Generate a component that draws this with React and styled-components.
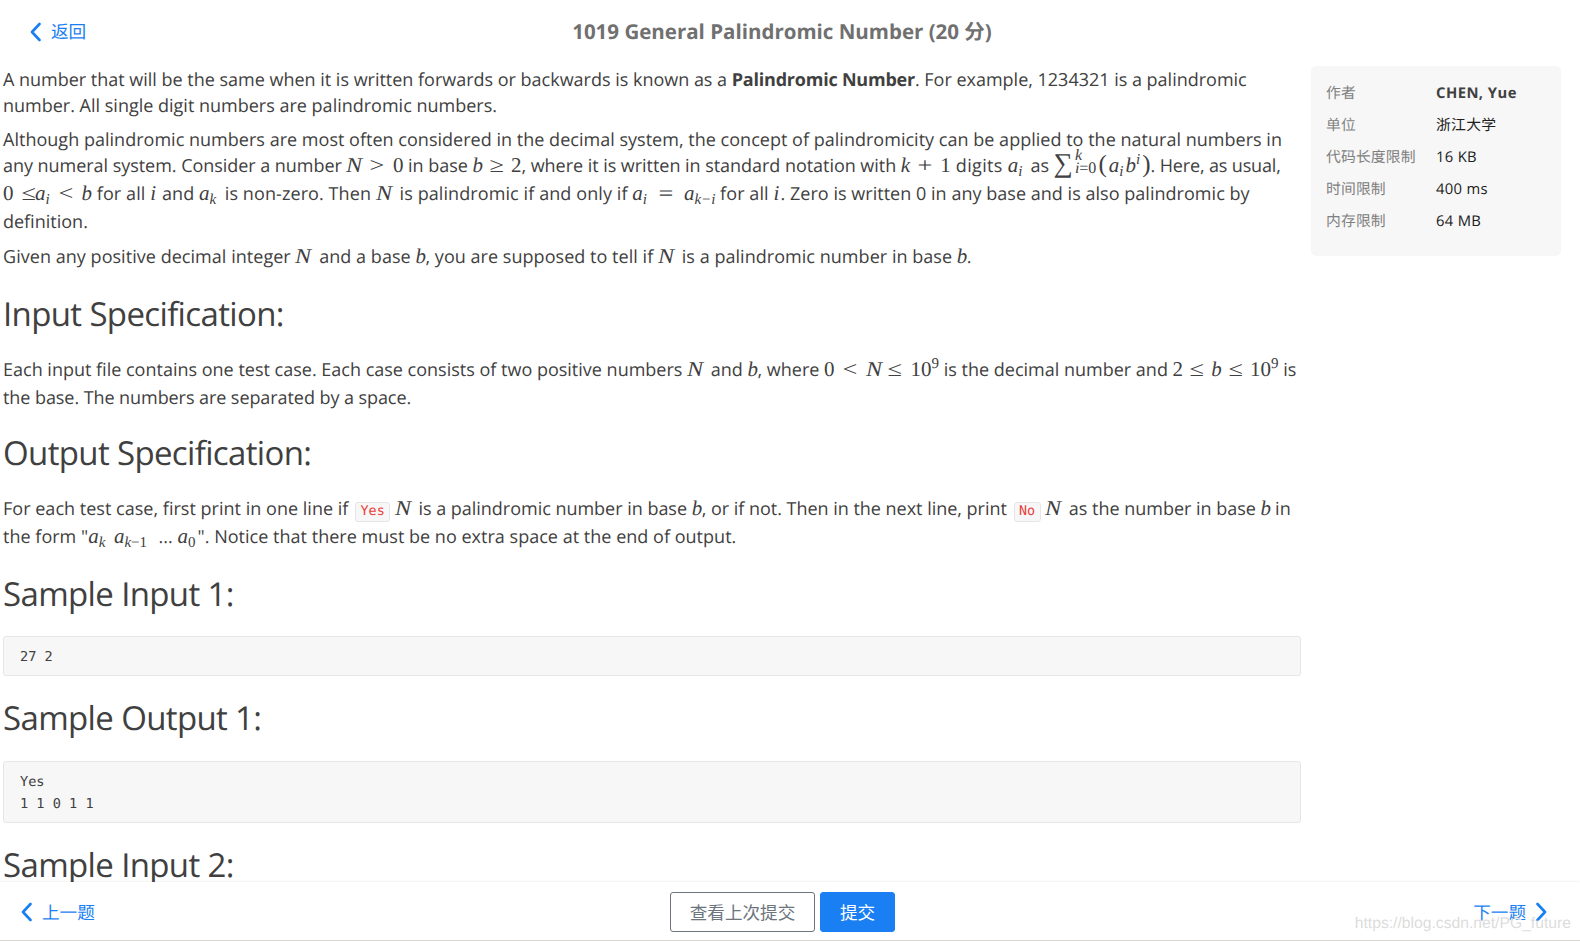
import styled, { createGlobalStyle } from "styled-components";

const GlobalStyle = createGlobalStyle`
  * {
    box-sizing: border-box;
  }

  body {
    margin: 0;
    background: #fff;
    color: #404040;
    font-family: "Open Sans", "Noto Sans CJK SC", sans-serif;
    text-rendering: geometricPrecision;
    overflow: hidden;
  }
`;

const Page = styled.div`
  display: flex;
  flex-direction: column;
  width: 1580px;
  height: 941px;
  overflow: hidden;
`;

const Header = styled.header`
  display: grid;
  grid-template-columns: 300px 1fr 300px;
  align-items: center;
  flex: none;
  width: 1564px;
  height: 62px;
  padding-top: 1px;
`;

const NavLink = styled.a`
  display: flex;
  align-items: center;
  gap: 10px;
  padding-left: ${({ $left }) => $left || 0}px;
  color: #1a7ff2;
  font-size: 17.6px;
  line-height: 26px;
  cursor: pointer;
`;

const Title = styled.h1`
  margin: 0;
  text-align: center;
  color: #707070;
  font-size: 20.5px;
  font-weight: 700;
  line-height: 30px;
  white-space: nowrap;
`;

const Body = styled.div`
  display: flex;
  flex: 1;
  align-items: flex-start;
  gap: 10px;
  min-height: 0;
  overflow: hidden;
`;

const Article = styled.main`
  flex: none;
  width: 1301px;
  padding: 5px 0 0 3px;
`;

const Paragraph = styled.div`
  margin-bottom: ${({ $gap }) => $gap || 8}px;
  font-size: 18px;
`;

const Line = styled.div`
  height: ${({ $h }) => $h || 26}px;
  line-height: 26px;
  letter-spacing: ${({ $ls }) => $ls || 0}px;
  white-space: pre;
`;

const Tight = styled.span`
  letter-spacing: ${({ $ls }) => $ls}px;
`;

const Term = styled.b`
  letter-spacing: -0.22px;
`;

const Heading = styled.h2`
  height: 40px;
  margin: 0 0 ${({ $gap }) => $gap || 23}px;
  font-size: 33px;
  font-weight: 400;
  line-height: 40px;
  letter-spacing: -0.64px;
  white-space: nowrap;
`;

const Formula = styled.span`
  display: inline-flex;
  justify-content: space-between;
  align-items: baseline;
  width: ${({ $w }) => $w}px;
  height: 20px;
  font-family: "Liberation Serif", serif;
  font-size: 21px;
  line-height: 20px;
  letter-spacing: 0;
`;

const Var = styled.i`
  font-style: italic;
`;

const WideVar = styled(Var)`
  display: inline-block;
  transform: scaleX(1.15);
  transform-origin: left;
`;

const Rel = styled.span`
  display: inline-block;
  transform: scaleX(1.25);
`;

const Script = styled.span`
  position: relative;
  top: ${({ $up }) => ($up ? -8 : 4)}px;
  font-size: 15px;
  line-height: 0;
`;

const Sigma = styled.span`
  font-size: 27px;
`;

const Limits = styled.span`
  display: inline-flex;
  flex-direction: column;
  align-self: center;
  height: 28px;
  margin: -4px 0;
  font-size: 16px;
  line-height: 13px;
`;

const Paren = styled.span`
  font-size: 25px;
`;

const Code = styled.code`
  display: inline-block;
  height: 20px;
  width: ${({ $w }) => $w}px;
  margin-left: 2px;
  border: 1px solid #e6e6e6;
  border-radius: 3px;
  background: #f7f7f7;
  color: #e8403a;
  font-family: "DejaVu Sans Mono", monospace;
  font-size: 13.4px;
  line-height: 18px;
  letter-spacing: 0;
  text-align: center;
`;

const Sample = styled.pre`
  width: 1298px;
  margin: 0 0 22px;
  padding: 9px 16px 7px;
  border: 1px solid #e6e6e6;
  border-radius: 3px;
  background: #f7f7f7;
  font-family: "DejaVu Sans Mono", monospace;
  font-size: 13.6px;
  line-height: 22px;
`;

const Info = styled.aside`
  display: grid;
  grid-template-columns: 110px 1fr;
  grid-auto-rows: 32px;
  align-items: center;
  width: 250px;
  height: 190px;
  margin-top: 4px;
  padding: 10px 15px;
  border-radius: 5px;
  background: #f7f7f7;
  font-size: 14.8px;
`;

const Label = styled.span`
  color: #808080;
  letter-spacing: 0.15px;
`;

const Value = styled.span`
  padding-top: 1px;
  color: ${({ $bold }) => ($bold ? "#404040" : "#202020")};
  font-weight: ${({ $bold }) => ($bold ? 700 : 400)};
  letter-spacing: ${({ $bold }) => ($bold ? 0.45 : 0.3)}px;
`;

const Footer = styled.footer`
  position: relative;
  display: grid;
  grid-template-columns: 649px 225px 1fr;
  align-items: center;
  flex: none;
  width: 100%;
  height: 59px;
  padding: 2px 33px 0 21px;
  border-bottom: 1px solid #d9d6d2;
  background: #fff;
  box-shadow: 0 0 3px rgba(0, 0, 0, 0.1);
`;

const Actions = styled.div`
  display: flex;
  gap: 5px;
`;

const Button = styled.button`
  flex: none;
  width: ${({ $primary }) => ($primary ? 75 : 145)}px;
  height: 40px;
  padding: 0 0 2px;
  border: 1px solid ${({ $primary }) => ($primary ? "#1a7ff2" : "#6c757d")};
  border-radius: 3px;
  background: ${({ $primary }) => ($primary ? "#1a7ff2" : "#fff")};
  color: ${({ $primary }) => ($primary ? "#fff" : "#6c757d")};
  font-family: inherit;
  font-size: 17.6px;
`;

const LinkText = styled.span`
  padding-top: 2px;
`;

const Next = styled(NavLink)`
  justify-content: flex-end;
`;

const Watermark = styled.span`
  position: absolute;
  right: 9px;
  bottom: 6px;
  color: rgba(190, 190, 190, 0.55);
  font-family: "Liberation Sans", sans-serif;
  font-size: 15.7px;
  line-height: 20px;
  text-shadow: 1px 1px 0 #fff;
`;

const details = [
  { label: "作者", value: "CHEN, Yue", bold: true },
  { label: "单位", value: "浙江大学" },
  { label: "代码长度限制", value: "16 KB" },
  { label: "时间限制", value: "400 ms" },
  { label: "内存限制", value: "64 MB" },
];

const Chevron = ({ right }) => (
  <svg width="11" height="20" viewBox="0 0 11 20" fill="none">
    <path
      d={right ? "M1.5 2 L9 10 L1.5 18" : "M9.5 2 L2 10 L9.5 18"}
      stroke="currentColor"
      strokeWidth="2.6"
      strokeLinecap="round"
      strokeLinejoin="round"
    />
  </svg>
);

const N = () => (
  <Formula $w={19}>
    <WideVar>N</WideVar>
  </Formula>
);

const B = () => (
  <Formula $w={10}>
    <Var>b</Var>
  </Formula>
);

const Indexed = ({ name = "a", sub }) => (
  <span>
    <Var>{name}</Var>
    <Script>{sub}</Script>
  </span>
);

const Billion = () => (
  <span>
    10<Script $up>9</Script>
  </span>
);

const Sum = () => (
  <Formula $w={97}>
    <Sigma>∑</Sigma>
    <Limits>
      <Var>k</Var>
      <span>
        <Var>i</Var>=0
      </span>
    </Limits>
    <Paren>(</Paren>
    <Indexed sub={<Var>i</Var>} />
    <span>
      <Var>b</Var>
      <Script $up>
        <Var>i</Var>
      </Script>
    </span>
    <Paren>)</Paren>
  </Formula>
);

export default function App() {
  return (
    <Page>
      <GlobalStyle />
      <Header>
        <NavLink $left={30}>
          <Chevron />
          返回
        </NavLink>
        <Title>1019 General Palindromic Number (20 分)</Title>
      </Header>

      <Body>
        <Article>
          <Paragraph>
            <Line $ls={-0.01}>
              A number that will be the same when it is written forwards or
              {" backwards is known as a "}
              <Term>Palindromic Number</Term>. For example, 1234321 is a
              palindromic
            </Line>
            <Line>
              number. All single digit numbers are palindromic numbers.
            </Line>
          </Paragraph>
          <Paragraph $gap={9}>
            <Line $ls={0.02}>
              Although palindromic numbers are most often considered in the
              {" decimal system, the concept of palindromicity can be applied to"}
              {" the natural numbers in"}
            </Line>
            <Line $h={28} $ls={-0.04}>
              {"any numeral system. Consider a number "}
              <Formula $w={57}>
                <WideVar>N</WideVar>
                <Rel>&gt;</Rel>
                <span>0</span>
              </Formula>
              {" in base "}
              <Formula $w={49}>
                <Var>b</Var>
                <Rel>≥</Rel>
                <span>2</span>
              </Formula>
              {", where it is written in standard notation with "}
              <Formula $w={50}>
                <Var>k</Var>
                <Rel>+</Rel>
                <span>1</span>
              </Formula>
              <Tight $ls={0.35}>{" digits "}</Tight>
              <Formula $w={18}>
                <Indexed sub={<Var>i</Var>} />
              </Formula>
              {" as "}
              <Sum />
              <Tight $ls={-0.15}>. Here, as usual,</Tight>
            </Line>
            <Line $h={28} $ls={0.09}>
              <Formula $w={89}>
                <span>0</span>
                <span>
                  <Rel>≤</Rel>
                  <Indexed sub={<Var>i</Var>} />
                </span>
                <Rel>&lt;</Rel>
                <Var>b</Var>
              </Formula>
              {" for all "}
              <Formula $w={7}>
                <Var>i</Var>
              </Formula>
              {" and "}
              <Formula $w={21}>
                <Indexed sub={<Var>k</Var>} />
              </Formula>
              {" is non-zero. Then "}
              <N />
              {" is palindromic if and only if "}
              <Formula $w={83}>
                <Indexed sub={<Var>i</Var>} />
                <Rel>=</Rel>
                <Indexed sub={<Var>k−i</Var>} />
              </Formula>
              {" for all "}
              <Formula $w={7}>
                <Var>i</Var>
              </Formula>
              <Tight $ls={0.03}>
                . Zero is written 0 in any base and is also palindromic by
              </Tight>
            </Line>
            <Line>definition.</Line>
          </Paragraph>
          <Paragraph $gap={24}>
            <Line $ls={0.04}>
              {"Given any positive decimal integer "}
              <N />
              {" and a base "}
              <B />
              {", you are supposed to tell if "}
              <N />
              {" is a palindromic number in base "}
              <B />.
            </Line>
          </Paragraph>

          <Heading>Input Specification:</Heading>
          <Paragraph $gap={22}>
            <Line $h={28}>
              {"Each input file contains one test case. Each case consists of two positive numbers "}
              <N />
              {" and "}
              <B />
              {", where "}
              <Formula $w={115}>
                <span>0</span>
                <Rel>&lt;</Rel>
                <WideVar>N</WideVar>
                <Rel>≤</Rel>
                <Billion />
              </Formula>
              {" is the decimal number and "}
              <Formula $w={106}>
                <span>2</span>
                <Rel>≤</Rel>
                <Var>b</Var>
                <Rel>≤</Rel>
                <Billion />
              </Formula>
              {" is"}
            </Line>
            <Line $ls={-0.07}>
              the base. The numbers are separated by a space.
            </Line>
          </Paragraph>

          <Heading>Output Specification:</Heading>
          <Paragraph $gap={24}>
            <Line $h={28} $ls={-0.02}>
              <Tight $ls={0.02}>
                {"For each test case, first print in one line if "}
              </Tight>
              <Code $w={35}>Yes</Code> <N />
              {" is a palindromic number in base "}
              <B />
              {", or if not. Then in the next line, print "}
              <Code $w={27}>No</Code> <N />
              {" as the number in base "}
              <B />
              {" in"}
            </Line>
            <Line $ls={0.02}>
              {'the form "'}
              <Formula $w={21}>
                <Indexed sub={<Var>k</Var>} />
              </Formula>{" "}
              <Formula $w={40}>
                <Indexed
                  sub={
                    <>
                      <Var>k</Var>−1
                    </>
                  }
                />
              </Formula>
              {" ... "}
              <Formula $w={20}>
                <Indexed sub="0" />
              </Formula>
              {'". Notice that there must be no extra space at the end of output.'}
            </Line>
          </Paragraph>

          <Heading $gap={22}>Sample Input 1:</Heading>
          <Sample>27 2</Sample>
          <Heading>Sample Output 1:</Heading>
          <Sample>{"Yes\n1 1 0 1 1"}</Sample>
          <Heading>Sample Input 2:</Heading>
        </Article>

        <Info>
          {details.map(({ label, value, bold }) => [
            <Label key={label}>{label}</Label>,
            <Value key={value} $bold={bold}>
              {value}
            </Value>,
          ])}
        </Info>
      </Body>

      <Footer>
        <NavLink>
          <Chevron />
          <LinkText>上一题</LinkText>
        </NavLink>
        <Actions>
          <Button>查看上次提交</Button>
          <Button $primary>提交</Button>
        </Actions>
        <Next>
          <LinkText>下一题</LinkText>
          <Chevron right />
        </Next>
        <Watermark>https://blog.csdn.net/PG_future</Watermark>
      </Footer>
    </Page>
  );
}
